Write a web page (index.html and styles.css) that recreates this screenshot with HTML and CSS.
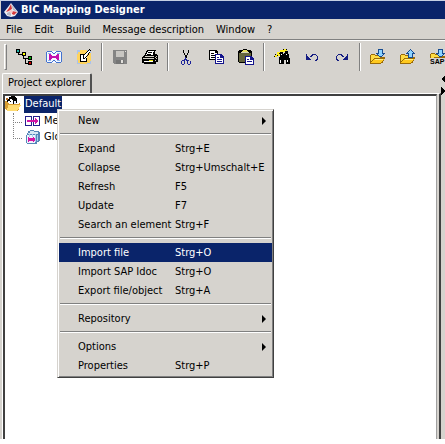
FILE: index.html
```html
<!DOCTYPE html>
<html lang="en">
<head>
<meta charset="utf-8">
<title>BIC Mapping Designer</title>
<link rel="stylesheet" href="styles.css">
</head>
<body>
<div class="window">
  <header class="titlebar">
    <svg class="logo" viewBox="0 0 14 14" aria-hidden="true">
      <path d="M7 0l3 4 4 5-3 4-4 1-4-1-3-4 4-5z" fill="#eef0f5"/>
      <path d="M7 1l1 5-3 2-3 1 3-4zM8 8l5 1-3 3-2-1z" fill="#d83a3c"/>
      <path d="M7 1l4 5 2 3-4-2zM3 10l4-2v5l-4-1z" fill="#b9bac6"/>
      <path d="M5 8l3-2 1 3-2 2z" fill="#f5c9c9"/>
    </svg>
    <h1>BIC Mapping Designer</h1>
  </header>
  <nav class="menubar">
    <button>File</button><button>Edit</button><button>Build</button><button>Message description</button><button>Window</button><button>?</button>
  </nav>
  <div class="toolbar" role="toolbar">
    <span class="grip"></span>
    <div class="group">
      <button aria-label="Structure"><svg viewBox="0 0 16 16">
        <path d="M2 4h1v1h4v1H2zM7 7h1v2h5v1H7zM9 10h1v4h3v1H9z"/>
        <path d="M0 0h4v4H0zM6 3h4v4H6zM12 7h4v4h-4zM12 12h4v4h-4z"/>
        <path d="M1 1h2v2H1z" fill="#20b0a8"/><path d="M7 4h2v2H7z" fill="#ff0"/><path d="M13 8h2v2h-2z" fill="#0a0"/><path d="M13 13h2v2h-2z" fill="#c00"/>
      </svg></button>
      <button aria-label="Mapping"><svg viewBox="0 0 16 16">
        <path d="M1 2h14v12H1z" fill="#f5f8ff"/>
        <path d="M1 2h5v1H1zM10 2h5v1h-5zM1 13h5v1H1zM10 13h5v1h-5zM0 3h1v10H0zM15 3h1v10h-1zM6 3h1v1H6zM7 4h2v1H7zM9 3h1v1H9zM7 11h2v1H7zM6 12h1v1H6zM9 12h1v1H9z" fill="#4272cf"/>
        <path d="M2 4h3v1H2zM11 4h3v1h-3zM2 11h3v1H2zM11 11h3v1h-3z" fill="#8fb5e8"/>
        <path d="M3 5h2v1h1v1h4V6h1V5h2v6h-2v-1h-1V9H6v1H5v1H3z" fill="#c410ae"/>
      </svg></button>
      <button aria-label="Edit object"><svg viewBox="0 0 16 16">
        <path d="M1 1h14v14H1z" fill="#a9c3ed"/>
        <path d="M4 1h7v1h3v2h1v8h-1v2h-3v1H4v-1H2v-3H1V5h1V3h2z" fill="#ffd35c"/>
        <path d="M4 5h7v8H4z" fill="#fff"/>
        <path d="M4 5h4v1H5v6h5V9h1v4H4zM13 0h1v1h-1zM14 1h1v1h-1zM12 1h1v1h-1zM11 2h1v1h-1zM10 3h1v1h-1zM9 4h1v1H9zM8 5h1v1H8zM7 6h1v4H7zM8 9h1v1H8zM9 8h1v1H9zM10 7h1v1h-1zM11 6h1v1h-1zM12 4h1v2h-1zM13 3h1v1h-1z"/>
        <path d="M12 2h2v1h-1v1h-1v1h-1v1h-1v1H9v1H8V6h1V5h1V4h1V3h1z" fill="#fff"/>
      </svg></button>
    </div>
    <span class="divider"></span>
    <div class="group">
      <button aria-label="Save" disabled><svg viewBox="0 0 16 16">
        <path d="M1 1h14v14H2v-1H1z" fill="#858585"/><path d="M4 2h8v6H4z" fill="#c8c6c2"/><path d="M4 11h8v4H4z" fill="#757575"/><path d="M9 11h2v3H9zM13 2h1v1h-1z" fill="#e2e0dc"/>
      </svg></button>
      <button aria-label="Print"><svg viewBox="0 0 16 16">
        <path d="M5 1h9v1h-1v3h2v1h1v7h-2v2H2v-1H0V8h1V7h1V6h1V4h1V2h1z"/>
        <path d="M6 2h6v1h-1v3H4V5h1V3h1z" fill="#fff"/><path d="M6 3h4v1H6zM5 5h4v1H5z"/>
        <path d="M3 7h9v1H2zM1 9h11v1H1zM13 8h1v1h-1zM14 7h1v1h-1zM13 11h1v1h-1zM14 9h1v1h-1z" fill="#d5d2c8"/>
        <path d="M2 12h9v1H2z" fill="#fff"/><path d="M7 11h4v1H7z" fill="#e4df00"/>
      </svg></button>
    </div>
    <span class="divider"></span>
    <div class="group">
      <button aria-label="Cut"><svg viewBox="0 0 16 16">
        <path d="M5 1h1v3h1v2h1v2H7V6H6V4H5zM10 1h1v3h-1v2H9v2H8V6h1V4h1zM7 8h2v1H7z"/>
        <path d="M7 8h1v2h1v1h2v1h2v3h-1v1h-2v-1H9v-3H8v-1H7v4H6v1H4v-1H3v-3h1v-1h2v-1h1zM4 12v3h2v-3zM10 12v3h2v-3z" fill="#1c2298" fill-rule="evenodd"/>
      </svg></button>
      <button aria-label="Copy"><svg viewBox="0 0 16 16">
        <path d="M1 1h7l2 2v8H1z"/><path d="M2 2h5v2h2v6H2z" fill="#fff"/><path d="M3 4h3v1H3zM3 6h4v1H3zM3 8h4v1H3z"/>
        <path d="M7 5h6l3 3v7H7z" fill="#14148c"/><path d="M8 6h4v3h3v5H8z" fill="#fff"/><path d="M13 7l1 1h-1zM9 8h2v1H9zM9 10h5v1H9zM9 12h5v1H9z" fill="#14148c"/>
      </svg></button>
      <button aria-label="Paste"><svg viewBox="0 0 16 16">
        <path d="M1 1h4V0h4v1h4v1h1v12H1v-1H0V2h1z"/><path d="M1 4h12v9H1z" fill="#65653d"/><path d="M4 3V2h1V1h4v1h1v1z" fill="#e6df62"/><path d="M3 3h8v1H3z" fill="#d7d4ba"/>
        <path d="M7 7h6l3 3v6H7z" fill="#14148c"/><path d="M8 8h4v3h3v4H8z" fill="#fff"/><path d="M9 10h2v1H9zM9 12h5v1H9z" fill="#14148c"/>
      </svg></button>
    </div>
    <span class="divider"></span>
    <div class="group">
      <button aria-label="Find"><svg viewBox="0 0 16 16">
        <path d="M3 3h3V1h3V0h4v2h-2v1H9v2H6v2H3v1H1V6h2z" fill="#ffef20"/>
        <path d="M1 5h1v1H1zM0 7h1v1H0zM3 6h1v1H3zM9 0h1v1H9zM12 0h1v1h-1zM6 3h3v2h1V4h1V2h3v3h1v4h1v6h-4v-4h-2v4H5V8h1V5H5V4h1z"/>
        <path d="M7 5h1v1H7zM6 11h1v3H6zM12 5h1v1h-1zM13 11h1v2h-1z" fill="#fff"/>
      </svg></button>
      <button aria-label="Undo"><svg viewBox="0 0 16 16">
        <path d="M2 5h1v2h1v1h1v1h1v1h1v1H2zM6 7h1V6h1V5h4v1h1v1h1v4h-1v1h-2v-1h1v-1h1V7h-1V6H9v1H8v1H6z" fill="#141c82"/>
      </svg></button>
      <button aria-label="Redo"><svg viewBox="0 0 16 16">
        <path d="M14 5h-1v2h-1v1h-1v1h-1v1H9v1h5zM10 7H9V6H8V5H4v1H3v1H2v4h1v1h2v-1H4v-1H3V7h1V6h3v1h1v1h2z" fill="#141c82"/>
      </svg></button>
    </div>
    <span class="divider"></span>
    <div class="group">
      <button aria-label="Import file"><svg viewBox="0 0 16 16">
        <path d="M0 6h1V5h4v1h6v2h4v2h-1v2h-1v2h-2v1H0z" fill="#9b6b08"/><path d="M1 6h4v1h5v2H4L1 13z" fill="#ffdc42"/><path d="M4 10h10l-3 4H1z" fill="#ffc91e"/><path d="M5 10h8v1H5z" fill="#fff08b"/>
        <path d="M8 0h5v4h2v1h-1v1h-1v1h-1v1H9V7H8V6H7V5H6V4h2z" fill="#174c91"/><path d="M9 1h3v4h1v1h-1v1H9V6H8V5h1z" fill="#8dd3ff"/>
      </svg></button>
      <button aria-label="Export file"><svg viewBox="0 0 16 16">
        <path d="M0 6h1V5h4v1h6v2h4v2h-1v2h-1v2h-2v1H0z" fill="#9b6b08"/><path d="M1 6h4v1h5v2H4L1 13z" fill="#ffdc42"/><path d="M4 10h10l-3 4H1z" fill="#ffc91e"/><path d="M5 10h8v1H5z" fill="#fff08b"/>
        <path d="M10 0h1v1h1v1h1v1h1v1h1v1h-2v4H8V5H6V4h1V3h1V2h1V1h1z" fill="#174c91"/><path d="M10 1h1v1h1v1h1v1h-1v4H9V4H8V3h1V2h1z" fill="#8dd3ff"/>
      </svg></button>
      <button aria-label="Import SAP Idoc" class="sap"><svg viewBox="0 0 16 16">
        <path d="M0 5h1V4h4v1h6v2h4v2h-1v1H0z" fill="#9b6b08"/><path d="M1 5h4v1h5v2H4L1 12z" fill="#ffdc42"/>
        <path d="M8 0h5v4h2v1h-1v1h-1v1h-1v1H9V7H8V6H7V5H6V4h2z" fill="#174c91"/><path d="M9 1h3v4h1v1h-1v1H9V6H8V5h1z" fill="#8dd3ff"/>
      </svg><span>SAP</span></button>
    </div>
  </div>
  <main class="workspace">
    <section class="explorer">
      <div class="tabs" role="tablist"><button role="tab" aria-selected="true">Project explorer</button></div>
      <div class="panel">
        <ul class="tree">
          <li class="root">
            <svg viewBox="0 0 16 16" aria-hidden="true">
              <path d="M0 5h4l2 3h6l3-1v3l-2 5H2l-2-3z" fill="#d99f31"/><path d="M3 9h13l-4 6H2z" fill="#ffdc72"/>
              <path d="M4 1h2V0h4v1h1v1h1v5h-2v1H8V6H7V5H5v2H3V6H2V3h2z"/><path d="M5 3h2v1h1v2H7v2H4V7H3V5h2z" fill="#fff"/><path d="M9 5h2v3H9z" fill="#e8f0ff"/><path d="M5 5h1v1H5z"/><path d="M1 2h2v2H1z" fill="#b76a22"/>
            </svg>
            <span class="selected">Default</span>
          </li>
          <li class="child">
            <svg viewBox="0 0 16 16" aria-hidden="true">
              <path d="M1 4h5v8H1zM10 4h5v8h-5z" fill="#fff"/><path d="M0 3h7v10H0zM1 4v8h5V4zM8 3h7v10H8zM9 4v8h5V4z" fill="#24208c" fill-rule="evenodd"/><path d="M2 7h8V5h1v1h1v1h1v2h-1v1h-1v1h-1V9H2z" fill="#d415a5"/>
            </svg>
            <span>Me</span>
          </li>
          <li class="child">
            <svg viewBox="0 0 16 16" aria-hidden="true">
              <path d="M5 1h4v1h5v1h1v9h-1v1h-2v2H2v-1H1V6h1V4h1V2h2z" fill="#5686b8"/><path d="M5 2h4v1h4v2H3V4h2z" fill="#d6e8f4"/><path d="M2 6h8v8H2z" fill="#eef4ff"/><path d="M12 6h1v6h-1zM10 5h1v8h-1zM4 5h1v3H4zM7 5h1v3H7z" fill="#a7d0ef"/><path d="M3 8h1v1h4V8h1v1h1v3H9v1H8v-1H4v1H3z" fill="#d415a5"/>
            </svg>
            <span>Glo</span>
          </li>
        </ul>
        <div class="context-menu" role="menu">
          <button role="menuitem" class="submenu"><span>New</span></button>
          <hr>
          <button role="menuitem"><span>Expand</span><kbd>Strg+E</kbd></button>
          <button role="menuitem"><span>Collapse</span><kbd>Strg+Umschalt+E</kbd></button>
          <button role="menuitem"><span>Refresh</span><kbd>F5</kbd></button>
          <button role="menuitem"><span>Update</span><kbd>F7</kbd></button>
          <button role="menuitem"><span>Search an element</span><kbd>Strg+F</kbd></button>
          <hr>
          <button role="menuitem" class="active"><span>Import file</span><kbd>Strg+O</kbd></button>
          <button role="menuitem"><span>Import SAP Idoc</span><kbd>Strg+O</kbd></button>
          <button role="menuitem"><span>Export file/object</span><kbd>Strg+A</kbd></button>
          <hr>
          <button role="menuitem" class="submenu"><span>Repository</span></button>
          <hr>
          <button role="menuitem" class="submenu"><span>Options</span></button>
          <button role="menuitem"><span>Properties</span><kbd>Strg+P</kbd></button>
        </div>
      </div>
    </section>
    <aside class="splitter">
      <button aria-label="Collapse panel"><svg viewBox="0 0 4 8"><path d="M4 0v8L0 4z"/></svg></button>
      <button aria-label="Expand panel"><svg viewBox="0 0 4 8"><path d="M0 0v8l4-4z"/></svg></button>
    </aside>
  </main>
</div>
</body>
</html>
```
FILE: styles.css
```css
* { box-sizing: border-box; }
body {
  margin: 0;
  background: #d6d3ce;
  color: #000;
  font: 11px/16px "DejaVu Sans Condensed", "DejaVu Sans", sans-serif;
}
button {
  margin: 0;
  padding: 0;
  border: 0;
  background: none;
  color: inherit;
  font: inherit;
  white-space: nowrap;
}
svg { display: block; flex: none; shape-rendering: crispEdges; }
.window {
  display: flex;
  flex-direction: column;
  min-height: 100vh;
  overflow: hidden;
  border-top: 1px solid #c5d0e4;
  border-bottom: 5px solid #fff;
}
.titlebar {
  display: flex;
  align-items: center;
  gap: 3px;
  height: 18px;
  margin-left: 1px;
  padding-left: 3px;
  background: #0a246a;
  color: #fff;
}
.logo { width: 14px; height: 14px; shape-rendering: auto; }
.titlebar h1 { margin: 0; font-size: 11px; line-height: 16px; }
.menubar {
  display: flex;
  gap: 12px;
  height: 21px;
  padding: 1px 6px 0;
  border-bottom: 1px solid #808080;
}
.toolbar {
  display: flex;
  align-items: center;
  height: 32px;
  padding-left: 4px;
  border-top: 1px solid #fff;
}
.grip {
  flex: none;
  width: 3px;
  height: 26px;
  border: 1px solid;
  border-color: #fff #808080 #808080 #fff;
}
.group { display: flex; flex: none; gap: 14px; padding: 0 9px; }
.group svg { width: 16px; height: 16px; }
.divider {
  flex: none;
  width: 2px;
  height: 28px;
  border-left: 1px solid #808080;
  border-right: 1px solid #fff;
}
.sap { position: relative; }
.sap span {
  position: absolute;
  left: 0;
  bottom: 0;
  background: #d6d3ce;
  font: bold 7px/7px "Liberation Sans", sans-serif;
}
.workspace { display: flex; flex: 1; }
.explorer {
  display: flex;
  flex: 1;
  flex-direction: column;
  padding-left: 2px;
}
.tabs { display: flex; height: 20px; margin-top: 1px; }
.tabs button {
  padding: 0 4px 2px 5px;
  border: 1px solid #fff;
  border-right: 2px solid #505050;
  border-bottom: 0;
  border-radius: 2px 2px 0 0;
}
.panel {
  display: flex;
  position: relative;
  flex: 1;
  border-top: 1px solid #fff;
  border-left: 1px solid #fff;
  border-right: 2px solid #404040;
}
.tree {
  flex: 1;
  margin: 0 2px 0 0;
  padding: 0;
  list-style: none;
  background: #fff;
  border: 2px solid #404040;
  border-right: 1px solid #a0a0a0;
  border-bottom: 0;
}
.tree li { display: flex; height: 16px; gap: 3px; }
.tree .root { height: 17px; }
.tree svg { width: 16px; height: 16px; }
.selected { padding: 0 1px; background: #0a246a; color: #fff; }
.child { padding-left: 8px; }
.child::before {
  content: "";
  width: 8px;
  height: 9px;
  border-left: 1px dotted #808080;
  border-bottom: 1px dotted #808080;
}
.child + .child::before { height: 25px; margin-top: -16px; }
.context-menu {
  position: absolute;
  top: 15px;
  left: 54px;
  width: 217px;
  padding: 1px 1px 2px;
  background: #d6d3ce;
  border: 1px solid;
  border-color: #d6d3ce #404040 #404040 #d6d3ce;
  box-shadow: inset 1px 1px #fff, inset -1px -1px #808080;
}
.context-menu button {
  display: grid;
  grid-template-columns: 97px 1fr;
  align-items: center;
  width: 100%;
  height: 19px;
  padding: 0 6px 0 19px;
  text-align: left;
}
.context-menu kbd { font: inherit; }
.context-menu .active { background: #0a246a; color: #fff; }
.submenu::after {
  content: "";
  justify-self: end;
  border: 4px solid transparent;
  border-left-color: #000;
  border-right: 0;
}
.context-menu hr {
  height: 2px;
  margin: 3px 1px 4px;
  border: 0;
  border-top: 1px solid #808080;
  border-bottom: 1px solid #fff;
}
.splitter {
  display: flex;
  flex-direction: column;
  gap: 4px;
  width: 4px;
  padding-top: 3px;
}
.splitter svg { width: 4px; height: 8px; }
```
